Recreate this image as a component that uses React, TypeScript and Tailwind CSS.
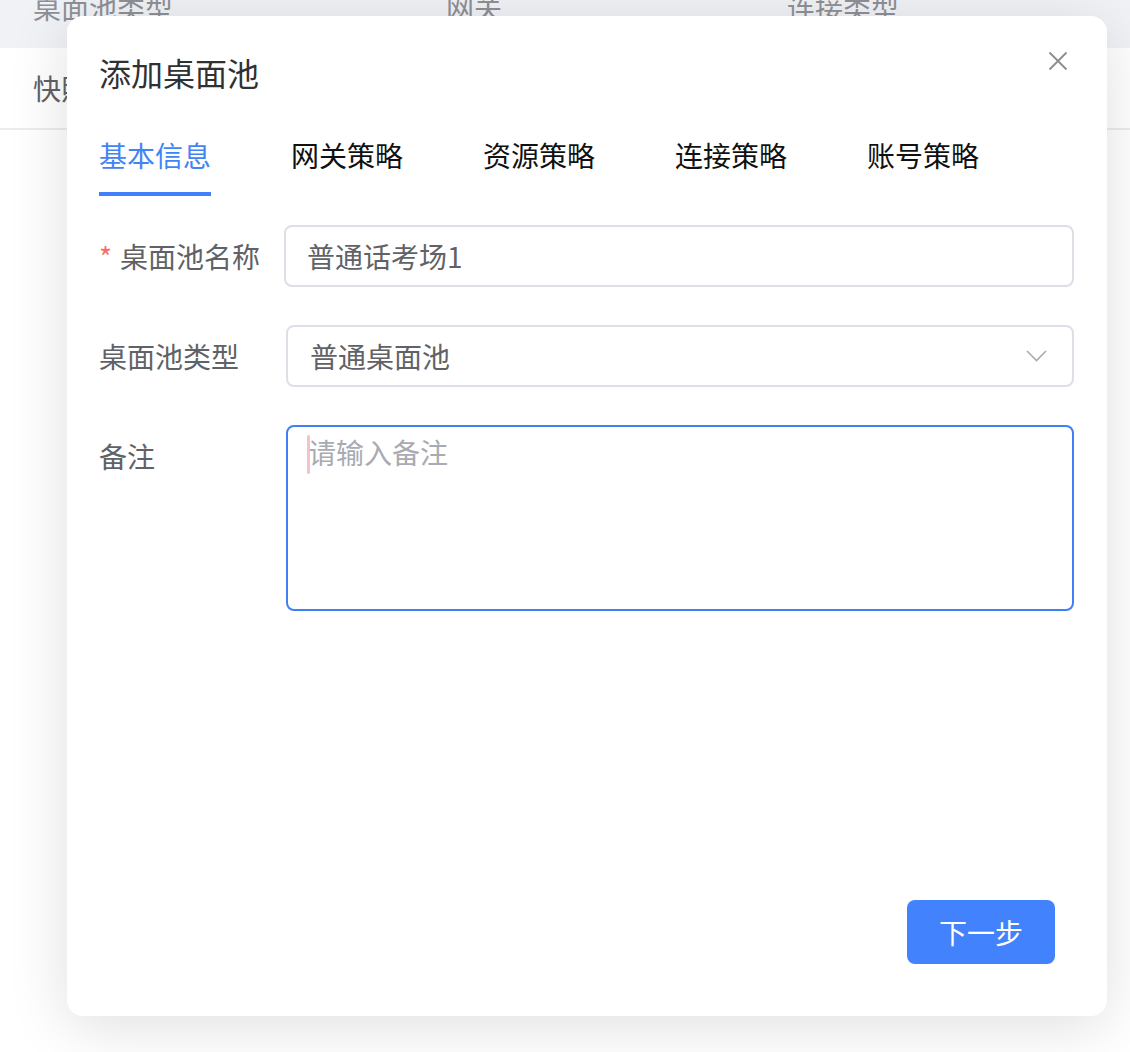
import { useState } from 'react';

const tabs = ['基本信息', '网关策略', '资源策略', '连接策略', '账号策略'];

function CloseIcon() {
  return (
    <svg className="w-5 h-5" viewBox="0 0 20 20" fill="none" stroke="#8c8c8c" strokeWidth={1.8}>
      <path d="M1.5 1.5l17 17M18.5 1.5l-17 17" />
    </svg>
  );
}

function ChevronDown() {
  return (
    <svg className="w-[21px] h-[12px]" viewBox="0 0 21 12" fill="none" stroke="#a8abb2" strokeWidth={1.6}>
      <path d="M1 1l9.5 9.5L20 1" />
    </svg>
  );
}

export default function App() {
  const [activeTab] = useState(0);

  return (
    <div className="relative w-[1130px] h-[1052px] bg-white overflow-hidden font-['Noto_Sans_CJK_SC',sans-serif]">
      {/* 背景のテーブル */}
      <div className="h-12 bg-[#f1f2f6] flex items-start pl-[33px] text-[28px] text-[#8e9096]">
        <span className="w-[413px] leading-7 -mt-[7px]">桌面池类型</span>
        <span className="w-[341px] leading-7 -mt-[7px]">网关</span>
        <span className="leading-7 -mt-[7px]">连接类型</span>
      </div>
      <div className="h-[82px] border-b-2 border-[#ebecf0] flex items-center pl-[33px] text-[28px] text-[#606266]">
        <span>快照</span>
      </div>

      {/* モーダル */}
      <div className="absolute left-[67px] top-[16px] w-[1040px] h-[1000px] bg-white rounded-2xl shadow-[0_10px_60px_rgba(0,0,0,0.13)] flex flex-col pl-8 pr-[33px] pt-[34px] pb-[52px]">
        <button className="absolute right-[39px] top-[35px]">
          <CloseIcon />
        </button>

        <h2 className="text-[32px] leading-[44px] text-[#303133]">添加桌面池</h2>

        <div className="mt-[41px] flex gap-[80px]">
          {tabs.map((tab, i) => (
            <div key={tab} className="flex flex-col">
              <span
                className={`text-[28px] leading-10 ${
                  i === activeTab ? 'text-[#4284f5]' : 'text-[#111111]'
                }`}
              >
                {tab}
              </span>
              <div className={`mt-[17px] h-1 ${i === activeTab ? 'bg-[#4080fa]' : 'bg-transparent'}`} />
            </div>
          ))}
        </div>

        {/* フォーム */}
        <div className="mt-[29px] flex items-center">
          <label className="w-[185px] shrink-0 flex items-center text-[28px] text-[#606266]">
            <span className="inline-block w-[21px] text-[#f56c6c]">*</span>
            桌面池名称
          </label>
          <div className="flex-1 h-[62px] border-2 border-[#dcdfe6] rounded-lg flex items-center pl-[21px] text-[28px] text-[#606266]">
            普通话考场1
          </div>
        </div>

        <div className="mt-[38px] flex items-center">
          <label className="w-[187px] shrink-0 text-[28px] text-[#606266]">桌面池类型</label>
          <div className="flex-1 h-[62px] border-2 border-[#dcdfe6] rounded-lg flex items-center justify-between pl-[22px] pr-[25px] text-[28px] text-[#606266]">
            <span>普通桌面池</span>
            <ChevronDown />
          </div>
        </div>

        <div className="mt-[38px] flex items-start">
          <label className="w-[187px] shrink-0 h-[62px] flex items-center text-[28px] text-[#606266]">备注</label>
          <div className="relative flex-1 h-[186px] border-2 border-[#4080f7] rounded-lg pl-5 pt-[5px] text-[28px] leading-10 text-[#a8abb2]">
            <span className="absolute left-[19px] top-[8px] w-[3px] h-[39px] rounded-sm bg-[#f3c3c7]" />
            请输入备注
          </div>
        </div>

        <div className="flex-1" />

        <div className="flex justify-end">
          <button className="mr-[19px] w-[148px] h-16 rounded-lg bg-[#4282fc] text-white text-[28px]">
            下一步
          </button>
        </div>
      </div>
    </div>
  );
}
